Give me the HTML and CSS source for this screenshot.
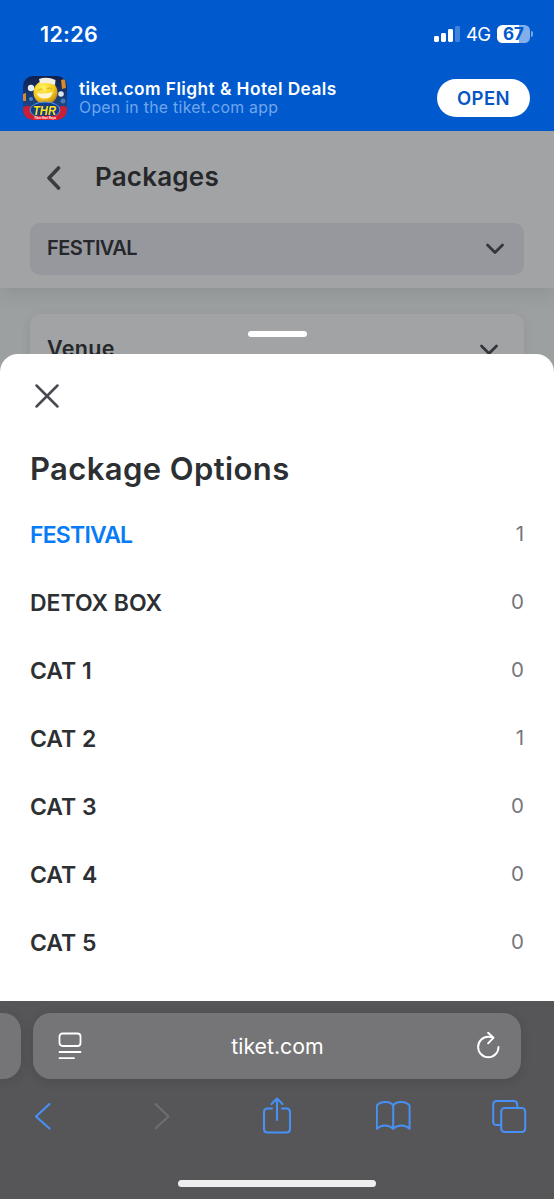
FILE: index.html
```html
<!DOCTYPE html>
<html lang="en">
<head>
<meta charset="utf-8">
<title>Package Options</title>
<link rel="stylesheet" href="styles.css">
</head>
<body>
<header class="top">
  <div class="status">
    <span class="clock">12:26</span>
    <div class="status-right">
      <svg class="signal" width="26" height="18" viewBox="0 0 26 18"><g fill="#fff"><rect x="0" y="11" width="5" height="6" rx="1.4"/><rect x="7" y="8" width="5" height="9" rx="1.4"/><rect x="14" y="4" width="5" height="13" rx="1.4"/><rect x="21" y="1" width="5" height="16" rx="1.4" opacity=".25"/></g></svg>
      <span class="network">4G</span>
      <div class="battery"><span>67</span></div>
      <i class="battery-tip"></i>
    </div>
  </div>
  <div class="banner">
    <svg class="app-icon" width="44" height="44" viewBox="0 0 44 44">
      <defs>
        <clipPath id="tile"><rect width="44" height="44" rx="10"/></clipPath>
        <radialGradient id="face" cx=".4" cy=".3" r=".75"><stop offset="0" stop-color="#fff45e"/><stop offset=".6" stop-color="#f5c91d"/><stop offset="1" stop-color="#b97a14"/></radialGradient>
        <linearGradient id="sky" x1="0" y1="0" x2="0" y2="1"><stop offset="0" stop-color="#10204f"/><stop offset="1" stop-color="#24579f"/></linearGradient>
      </defs>
      <g clip-path="url(#tile)">
        <rect width="44" height="44" fill="url(#sky)"/>
        <path d="M38 4l4-1 1 9-4 1zM0 18l3-1v8H0z" fill="#d98a26"/>
        <circle cx="8" cy="12" r="3.2" fill="#e5edf5"/><circle cx="38" cy="18" r="2.800" fill="#dbe5ee"/>
        <circle cx="8" cy="23" r="2" fill="#4a86c5"/><circle cx="40" cy="25" r="2.500" fill="#447cb5"/>
        <path d="M0 31q8-3 11 2l22 0q4-5 11-2v13H0z" fill="#c81f35"/>
        <circle cx="22.500" cy="16.500" r="12" fill="url(#face)"/>
        <path d="M16 3q8-3 16.500 1l-.5 5q-8-3-15-1.500z" fill="#f3f0df"/>
        <path d="M13.500 17q8 1.500 16-1-1 6-7 6.500-7 0-9-5.500z" fill="#fff6d8"/>
        <path d="M15 14.500q2-2.500 4.500-1M24 12.800q2.800-2 5 .4" fill="none" stroke="#c79a1c" stroke-width=".8"/>
        <ellipse cx="22" cy="34" rx="15" ry="8" fill="#123d8c" stroke="#5199df"/>
        <text x="21.500" y="38.900" text-anchor="middle" textLength="23" lengthAdjust="spacingAndGlyphs" class="icon-word">THR</text>
        <rect x="10" y="39.800" width="24" height="4.200" rx="1" fill="#dc2135"/>
        <text x="22" y="43" text-anchor="middle" class="icon-tag">Tiket Hari Raya</text>
      </g>
    </svg>
    <div class="app-copy">
      <div class="app-name">tiket.com Flight &amp; Hotel Deals</div>
      <div class="app-sub">Open in the tiket.com app</div>
    </div>
    <button class="open">OPEN</button>
  </div>
</header>

<main class="page">
  <section class="page-head">
    <div class="title-row">
      <svg width="16" height="26" viewBox="0 0 16 26"><path d="M13.500 4L4 14l9.500 10" fill="none" stroke="#3a3c40" stroke-width="3.600" stroke-linecap="round" stroke-linejoin="round"/></svg>
      <h1>Packages</h1>
    </div>
    <div class="select">
      <span>FESTIVAL</span>
      <svg width="20" height="14" viewBox="0 0 20 14"><path d="M2.500 4L10 11.500 17.500 4" fill="none" stroke="#34363b" stroke-width="2.800" stroke-linecap="round" stroke-linejoin="round"/></svg>
    </div>
  </section>
  <section class="card">
    <span>Venue</span>
    <svg width="20" height="14" viewBox="0 0 20 14"><path d="M2.500 3L10 10.500 17.500 3" fill="none" stroke="#34363b" stroke-width="2.800" stroke-linecap="round" stroke-linejoin="round"/></svg>
  </section>
  <i class="handle"></i>
</main>

<section class="sheet">
  <svg class="close" width="26" height="26" viewBox="0 0 26 26"><path d="M2.500 2.500l21 21M23.500 2.500l-21 21" fill="none" stroke="#484a50" stroke-width="2.500" stroke-linecap="round"/></svg>
  <h2>Package Options</h2>
  <ul class="options">
    <li class="selected"><span>FESTIVAL</span><b>1</b></li>
    <li><span>DETOX BOX</span><b>0</b></li>
    <li><span>CAT 1</span><b>0</b></li>
    <li><span>CAT 2</span><b>1</b></li>
    <li><span>CAT 3</span><b>0</b></li>
    <li><span>CAT 4</span><b>0</b></li>
    <li><span>CAT 5</span><b>0</b></li>
  </ul>
</section>

<footer class="browser">
  <div class="tabs">
    <div class="prev-tab"></div>
    <div class="address">
      <svg width="24" height="28" viewBox="0 0 24 28" fill="none" stroke="#fff" stroke-width="1.800" stroke-linecap="round"><rect x="1.500" y="1.500" width="21" height="12.500" rx="3"/><path d="M1.500 20h21M1.500 26.200h14.500"/></svg>
      <span>tiket.com</span>
      <svg width="24" height="28" viewBox="0 0 24 28" fill="none" stroke="#fff" stroke-width="1.900" stroke-linecap="round" stroke-linejoin="round"><path d="M22.500 15a10.200 10.200 0 1 1-10.200-10.200c2 0 3.300.2 4.800.8"/><path d="M12.100.8l5.300 5-5.300 5.500"/></svg>
    </div>
  </div>
  <nav class="tools">
    <svg width="36" height="38" viewBox="0 0 36 38" fill="none" stroke="#4790f5" stroke-width="2.100" stroke-linecap="round" stroke-linejoin="round"><path d="M23.500 7L10 19.500l13.500 12"/></svg>
    <svg width="36" height="38" viewBox="0 0 36 38" fill="none" stroke="#6e6e70" stroke-width="2.100" stroke-linecap="round" stroke-linejoin="round"><path d="M12.500 7l13 12.500-13 12"/></svg>
    <svg width="36" height="38" viewBox="0 0 36 38" fill="none" stroke="#4790f5" stroke-width="2.100" stroke-linecap="round" stroke-linejoin="round"><path d="M13 11.500H8.500q-3.500 0-3.500 3.500v17q0 3.500 3.500 3.500h19q3.500 0 3.500-3.500V15q0-3.500-3.500-3.500H23M18 23V2M12.500 7L18 1.500 23.500 7"/></svg>
    <svg width="36" height="38" viewBox="0 0 36 38" fill="none" stroke="#4790f5" stroke-width="2" stroke-linejoin="round"><path d="M17.200 8.500C14.500 4 5 3.500.8 8.500v23.300c4.500-4.300 12-4.300 16.400 0 4.400-4.300 11.900-4.300 16.400 0V8.500C29.400 3.500 19.900 4 17.200 8.500zM17.200 8.500v23.300"/></svg>
    <svg width="36" height="38" viewBox="0 0 36 38" fill="none" stroke="#4790f5" stroke-width="2.100"><rect x="9.200" y="11" width="24" height="24" rx="3.500"/><path d="M9.200 28H4.700Q1.200 28 1.200 24.500V7.500q0-3.500 3.500-3.500h17Q25.200 4 25.200 7.500V11"/></svg>
  </nav>
  <i class="home"></i>
</footer>
</body>
</html>
```

FILE: styles.css
```css
* { box-sizing: border-box; }
body { margin: 0; width: 554px; height: 1199px; overflow: hidden; background: #9fa1a3; font-family: Inter, "Liberation Sans", sans-serif; }
h1, h2, ul { margin: 0; padding: 0; }
svg { display: block; flex: none; }
.top { height: 131px; background: #005ace; color: #fff; }
.status { height: 69px; display: flex; justify-content: space-between; padding: 0 21px 1px 40px; align-items: center; }
.clock { font-size: 21.5px; font-weight: 600; letter-spacing: .3px; }
.status-right { display: flex; align-items: center; }
.network { font-size: 18.5px; margin-left: 6px; width: 25px; letter-spacing: -.7px; }
.battery { width: 33px; height: 18px; margin-left: 6px; border-radius: 5.5px; background: linear-gradient(90deg, #fff 67%, #82aee9 67%); color: #005ace; font-weight: 700; font-size: 17px; line-height: 18px; text-align: center; }
.battery-tip { width: 2px; height: 6px; margin-left: 1px; border-radius: 0 3px 3px 0; background: #79a7e2; }
.banner { height: 58px; display: flex; align-items: center; padding: 0 24px 0 23px; }
.icon-word { font: italic 900 13px "Liberation Sans", sans-serif; fill: #ffe51e; stroke: #18305a; stroke-width: .8px; paint-order: stroke; }
.icon-tag { font: 700 3px "Liberation Sans", sans-serif; fill: #fff; }
.app-copy { margin-left: 12px; flex: 1; }
.app-name { font-size: 17.3px; line-height: 20px; font-weight: 600; letter-spacing: .44px; white-space: nowrap; }
.app-sub { font-size: 15.8px; line-height: 18px; letter-spacing: .3px; color: #72a6ec; }
.open { width: 93px; height: 38px; border: 0; border-radius: 19px; background: #fff; color: #0756c5; font: 600 18.5px Inter, sans-serif; letter-spacing: .4px; padding: 0; }
.page { height: 247px; overflow: hidden; position: relative; background: #9da0a1; color: #25272b; }
.page-head { position: relative; height: 157px; padding: 0 30px; background: #a2a3a5; box-shadow: 0 6px 18px -1px rgba(65, 68, 72, .16); }
.title-row { height: 92px; display: flex; align-items: center; padding-left: 15px; }
.title-row h1 { margin-left: 34px; font-size: 26px; line-height: 34px; font-weight: 600; letter-spacing: .2px; color: #25272a; }
.select { height: 52px; padding: 0 19px 2px 17px; border-radius: 10px; background: #97989e; display: flex; align-items: center; justify-content: space-between; font-size: 20px; font-weight: 600; letter-spacing: -.55px; }
.card { margin: 26px 30px 0; height: 90px; padding: 20px 25px 0 17px; border-radius: 10px; background: #a2a3a5; box-shadow: 0 2px 9px rgba(65, 68, 72, .14); display: flex; justify-content: space-between; font-size: 21.5px; line-height: 28px; font-weight: 600; letter-spacing: .3px; }
.card svg { margin-top: 9px; }
.handle { position: absolute; left: 248px; top: 200px; width: 59px; height: 6px; border-radius: 3px; background: #fff; }
.sheet { position: relative; height: 647px; margin-top: -24px; padding: 29px 30px 0; background: #fff; border-radius: 18px 18px 0 0; color: #2d3033; }
.close { margin-left: 4px; }
.sheet h2 { margin-top: 40px; font-size: 31px; line-height: 40px; font-weight: 600; letter-spacing: .4px; }
.options { margin-top: 12px; list-style: none; }
.options li { height: 68px; display: flex; align-items: center; justify-content: space-between; }
.options span { font-size: 23px; font-weight: 600; letter-spacing: -.02px; }
.options b { font-size: 20.5px; font-weight: 400; color: #74767b; padding-bottom: 3px; }
.options .selected span { color: #087bf6; letter-spacing: -.8px; }
.browser { height: 198px; padding-top: 12px; background: #565658; }
.tabs { height: 66px; display: flex; gap: 12px; }
.prev-tab { width: 21px; border-radius: 0 18px 18px 0; background: #757577; box-shadow: 0 2px 12px rgba(0, 0, 0, .12); }
.address { width: 488px; border-radius: 18px; background: #757577; box-shadow: 0 2px 12px rgba(0, 0, 0, .12); display: flex; justify-content: space-between; align-items: center; padding: 0 21px 0 25px; color: #fff; font-size: 21.3px; }
.address span { margin-right: 3px; }
.tools { height: 76px; display: flex; justify-content: space-between; padding: 18px 26px 0; }
.home { display: block; width: 198px; height: 7px; margin: 25px 0 0 178px; border-radius: 4px; background: #eee; }
```
